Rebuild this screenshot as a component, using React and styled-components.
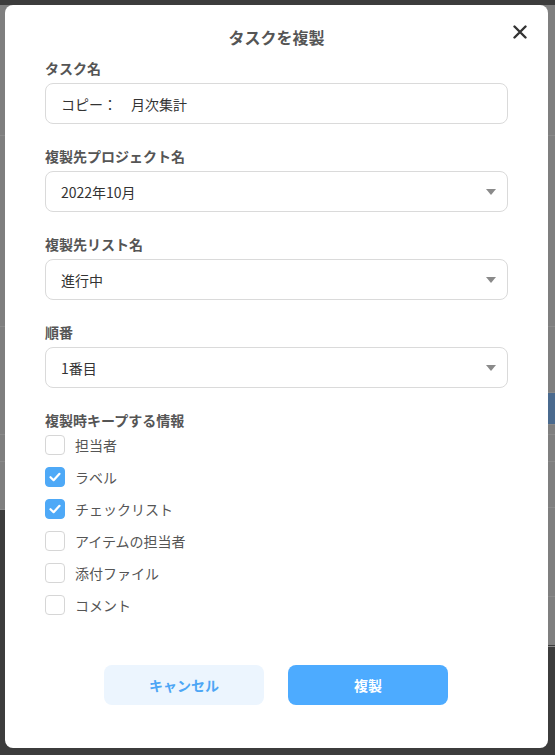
import styled, { createGlobalStyle } from "styled-components";

const GlobalStyle = createGlobalStyle`
  html, body {
    margin: 0;
    padding: 0;
  }
  body {
    background: #3c3c3c;
    font-family: "Noto Sans CJK JP", "Noto Sans", sans-serif;
  }
`;

const fields = [
  { label: "タスク名", value: "コピー：　月次集計", select: false },
  { label: "複製先プロジェクト名", value: "2022年10月", select: true },
  { label: "複製先リスト名", value: "進行中", select: true },
  { label: "順番", value: "1番目", select: true },
];

const keepOptions = [
  { label: "担当者", checked: false },
  { label: "ラベル", checked: true },
  { label: "チェックリスト", checked: true },
  { label: "アイテムの担当者", checked: false },
  { label: "添付ファイル", checked: false },
  { label: "コメント", checked: false },
];

// dimmed page behind the dialog
const leftRows = [131, 191, 108, 27, 48];
const rightRows = [131, 191, 66, 32, 10, 27, 46, 89, 50];

export default function App() {
  return (
    <>
      <GlobalStyle />
      <Screen>
        <Backdrop>
          <BgColumn $height={505}>
            {leftRows.map((h, i) => (
              <BgRow key={i} $height={h} />
            ))}
          </BgColumn>
          <BgColumn $height={640}>
            {rightRows.map((h, i) => (
              <BgRow key={i} $height={h} $blue={i === 3} />
            ))}
          </BgColumn>
        </Backdrop>
        <Modal>
          <CloseButton aria-label="閉じる">
            <svg width="14" height="14" viewBox="0 0 14 14">
              <path
                d="M1.5 1.5 L12.5 12.5 M12.5 1.5 L1.5 12.5"
                stroke="#333"
                strokeWidth="2.4"
                strokeLinecap="round"
              />
            </svg>
          </CloseButton>
          <Title>タスクを複製</Title>
          <Form>
            {fields.map((f) => (
              <Field key={f.label}>
                <Label>{f.label}</Label>
                <InputBox>
                  <span>{f.value}</span>
                  {f.select && <Caret />}
                </InputBox>
              </Field>
            ))}
            <Field>
              <Label>複製時キープする情報</Label>
              <CheckList>
                {keepOptions.map((o) => (
                  <CheckRow key={o.label}>
                    <Box $checked={o.checked}>
                      {o.checked && (
                        <svg width="14" height="14" viewBox="0 0 14 14">
                          <path
                            d="M2.5 7.2 L5.6 10.2 L11.5 3.8"
                            fill="none"
                            stroke="#fff"
                            strokeWidth="2.2"
                            strokeLinecap="round"
                            strokeLinejoin="round"
                          />
                        </svg>
                      )}
                    </Box>
                    <CheckLabel>{o.label}</CheckLabel>
                  </CheckRow>
                ))}
              </CheckList>
            </Field>
          </Form>
          <Actions>
            <Button>キャンセル</Button>
            <Button $primary>複製</Button>
          </Actions>
        </Modal>
      </Screen>
    </>
  );
}

const Screen = styled.div`
  position: relative;
  width: 555px;
  height: 755px;
  overflow: hidden;
  background: #3c3c3c;
`;

const Backdrop = styled.div`
  display: flex;
  align-items: flex-start;
  padding-top: 5px;
`;

const BgColumn = styled.div`
  flex: 1;
  height: ${(p) => p.$height}px;
  background: #7f7f7f;
  display: flex;
  flex-direction: column;
`;

const BgRow = styled.div`
  height: ${(p) => p.$height}px;
  flex-shrink: 0;
  box-sizing: border-box;
  border-bottom: 1px solid #8a8a8a;
  background: ${(p) => (p.$blue ? "#4a6a8e" : "transparent")};
`;

const Modal = styled.div`
  position: absolute;
  top: 5px;
  left: 5px;
  width: 543px;
  height: 743px;
  box-sizing: border-box;
  background: #fff;
  border-radius: 8px;
  padding: 20px 40px 43px;
  display: flex;
  flex-direction: column;
`;

const CloseButton = styled.button`
  position: absolute;
  top: 17px;
  right: 18px;
  width: 20px;
  height: 20px;
  padding: 0;
  border: none;
  background: none;
  display: flex;
  align-items: center;
  justify-content: center;
  cursor: pointer;
`;

const Title = styled.h2`
  margin: 0;
  height: 24px;
  line-height: 24px;
  text-align: center;
  font-size: 16px;
  font-weight: 700;
  color: #555;
`;

const Form = styled.div`
  margin-top: 9px;
  display: flex;
  flex-direction: column;
  gap: 22px;
`;

const Field = styled.div`
  display: flex;
  flex-direction: column;
  gap: 5px;
`;

const Label = styled.div`
  line-height: 20px;
  height: 20px;
  font-size: 14px;
  font-weight: 700;
  color: #555;
`;

const InputBox = styled.div`
  height: 41px;
  box-sizing: border-box;
  border: 1px solid #dadada;
  border-radius: 8px;
  padding: 0 11px 0 15px;
  display: flex;
  align-items: center;
  justify-content: space-between;
  font-size: 14px;
  color: #333;
`;

const Caret = styled.span`
  width: 0;
  height: 0;
  border-left: 5px solid transparent;
  border-right: 5px solid transparent;
  border-top: 6px solid #8a8a8a;
`;

const CheckList = styled.div`
  display: flex;
  flex-direction: column;
  gap: 12px;
`;

const CheckRow = styled.label`
  display: flex;
  align-items: center;
  height: 20px;
  gap: 10px;
`;

const Box = styled.span`
  width: 20px;
  height: 20px;
  box-sizing: border-box;
  border-radius: 4px;
  border: 1px solid ${(p) => (p.$checked ? "#4ea9f7" : "#d6d6d6")};
  background: ${(p) => (p.$checked ? "#4ea9f7" : "#fff")};
  display: flex;
  align-items: center;
  justify-content: center;
`;

const CheckLabel = styled.span`
  font-size: 14px;
  color: #555;
  line-height: 20px;
`;

const Actions = styled.div`
  margin-top: 50px;
  padding-right: 1px;
  display: flex;
  justify-content: center;
  gap: 24px;
`;

const Button = styled.button`
  width: 160px;
  height: 40px;
  border: none;
  border-radius: 8px;
  font-family: inherit;
  font-size: 14px;
  font-weight: 700;
  background: ${(p) => (p.$primary ? "#4dabff" : "#ecf5fe")};
  color: ${(p) => (p.$primary ? "#fff" : "#4da6f5")};
  cursor: pointer;
`;
